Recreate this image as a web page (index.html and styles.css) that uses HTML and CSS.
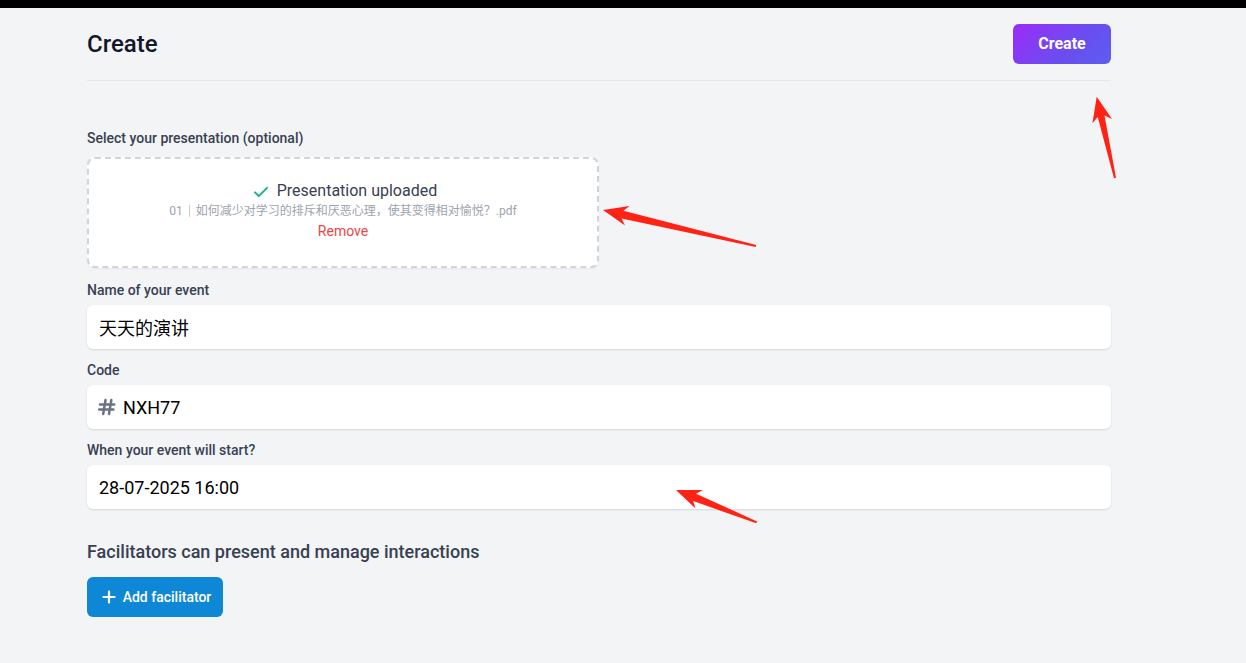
FILE: index.html
```html
<!DOCTYPE html>
<html lang="en">
<head>
<meta charset="utf-8">
<title>Create</title>
<link rel="stylesheet" href="styles.css">
</head>
<body>
<div class="topbar"></div>
<main class="page">
  <header class="header">
    <h1 class="title">Create</h1>
    <button class="btn-create">Create</button>
  </header>

  <section class="form">
    <div class="field field-upload">
      <label class="label">Select your presentation (optional)</label>
      <div class="upload">
        <div class="upload-status">
          <svg class="check" width="18" height="18" viewBox="0 0 24 24"><path d="M4 12.5l5 5L20 6.5" fill="none" stroke="#10b981" stroke-width="2.6" stroke-linecap="round" stroke-linejoin="round"/></svg>
          <span>Presentation uploaded</span>
        </div>
        <div class="upload-file"><span class="num">01</span><span class="sep"></span><span class="fname">如何减少对学习的排斥和厌恶心理，使其变得相对愉悦？.pdf</span></div>
        <div class="remove">Remove</div>
      </div>
    </div>

    <div class="field">
      <label class="label">Name of your event</label>
      <div class="input"><span class="value">天天的演讲</span></div>
    </div>

    <div class="field">
      <label class="label">Code</label>
      <div class="input">
        <svg class="hash" width="18" height="18" viewBox="0 0 18 18"><path d="M7.5 2L5.2 16M13.3 2L11 16M2 6.5H16.2M1.2 11.5H15.4" fill="none" stroke="#6b7280" stroke-width="2.5" stroke-linecap="round"/></svg>
        <span class="value">NXH77</span>
      </div>
    </div>

    <div class="field">
      <label class="label">When your event will start?</label>
      <div class="input"><span class="value">28-07-2025 16:00</span></div>
    </div>

    <h2 class="section-title">Facilitators can present and manage interactions</h2>
    <button class="btn-add">
      <svg width="14" height="14" viewBox="0 0 14 14"><path d="M7 1.5V12.5M1.5 7H12.5" stroke="#fff" stroke-width="2.2" stroke-linecap="round"/></svg>
      <span>Add facilitator</span>
    </button>
  </section>
</main>

<svg class="arrows" width="1246" height="663" viewBox="0 0 1246 663">
  <polygon fill="#ff2316" points="1096.7,96.7 1112,118.9 1104.5,115.4 1116,177.8 1114,178.2 1097.7,117 1092.4,123.3"/>
  <polygon fill="#ff2316" points="603,210 629.6,206 623.4,210.7 756.2,245 755.8,247 621.6,218.5 625,225.4"/>
  <polygon fill="#ff2316" points="676,490 702.9,490 696.1,493.7 757.1,521.4 756.3,523.2 693.1,501.1 695.5,508.6"/>
</svg>
</body>
</html>
```

FILE: styles.css
```css
* { box-sizing: border-box; }
html, body { margin: 0; padding: 0; }
body {
  background: #f3f4f6;
  font-family: Roboto, "Noto Sans CJK SC", "Liberation Sans", sans-serif;
  color: #374151;
  width: 1246px;
  height: 663px;
  overflow: hidden;
  position: relative;
}
.topbar { height: 8px; background: #000; }
.page { width: 1024px; margin-left: 87px; }
.header {
  display: flex;
  align-items: center;
  justify-content: space-between;
  padding: 16px 0;
  border-bottom: 1px solid #e5e7eb;
}
.title {
  margin: 0;
  font-size: 24px;
  line-height: 32px;
  font-weight: 500;
  color: #111827;
}
.btn-create {
  width: 98px;
  height: 40px;
  border: none;
  border-radius: 6px;
  background: linear-gradient(135deg, #9b2cf7 0%, #6a4df0 60%, #5b5ef0 100%);
  color: #fff;
  font-family: Roboto, sans-serif;
  font-size: 16px;
  font-weight: 700;
  padding: 0 0 2px;
}
.form { padding-top: 47px; }
.field { display: flex; flex-direction: column; margin-bottom: 11px; }
.field-upload { margin-bottom: 12px; }
.label {
  font-size: 14px;
  line-height: 20px;
  font-weight: 500;
  color: #374151;
  margin-bottom: 5px;
}
.field-upload .label { margin-bottom: 9px; }
.upload {
  width: 512px;
  height: 111px;
  background: #fff;
  border: 2px dashed #d1d5db;
  border-radius: 8px;
  box-shadow: 0 1px 2px rgba(0,0,0,0.06);
  display: flex;
  flex-direction: column;
  align-items: center;
  padding-top: 20px;
}
.upload-status {
  display: flex;
  align-items: center;
  gap: 7px;
  font-size: 16px;
  line-height: 24px;
  color: #374151;
  padding-left: 3px;
}
.upload-status .check { margin-top: 1px; }
.upload-file {
  display: flex;
  align-items: center;
  font-size: 12px;
  line-height: 16px;
  color: #9ca3af;
  margin-top: 0;
}
.upload-file .sep {
  display: inline-block;
  width: 1px;
  height: 12px;
  background: #e0c9b0;
  margin: 0 6px 0 6px;
}
.remove {
  font-size: 14px;
  line-height: 20px;
  color: #ef4444;
  margin-top: 2px;
}
.input {
  height: 44px;
  background: #fff;
  border-radius: 6px;
  box-shadow: 0 1px 2px rgba(0,0,0,0.12);
  display: flex;
  align-items: center;
  padding: 0 12px;
  gap: 7px;
}
.value {
  font-size: 18px;
  color: #000;
}
.hash { flex: none; margin-left: -1px; }
.section-title {
  margin: 29px 0 11px;
  font-size: 18px;
  line-height: 28px;
  font-weight: 500;
  color: #374151;
}
.btn-add {
  width: 136px;
  height: 40px;
  border: none;
  border-radius: 6px;
  background: #0f87d7;
  color: #fff;
  font-family: Roboto, sans-serif;
  font-size: 14px;
  font-weight: 500;
  display: flex;
  align-items: center;
  justify-content: center;
  gap: 7px;
  padding: 0 0 0 3px;
}
.arrows {
  position: absolute;
  left: 0;
  top: 0;
  pointer-events: none;
}
```
